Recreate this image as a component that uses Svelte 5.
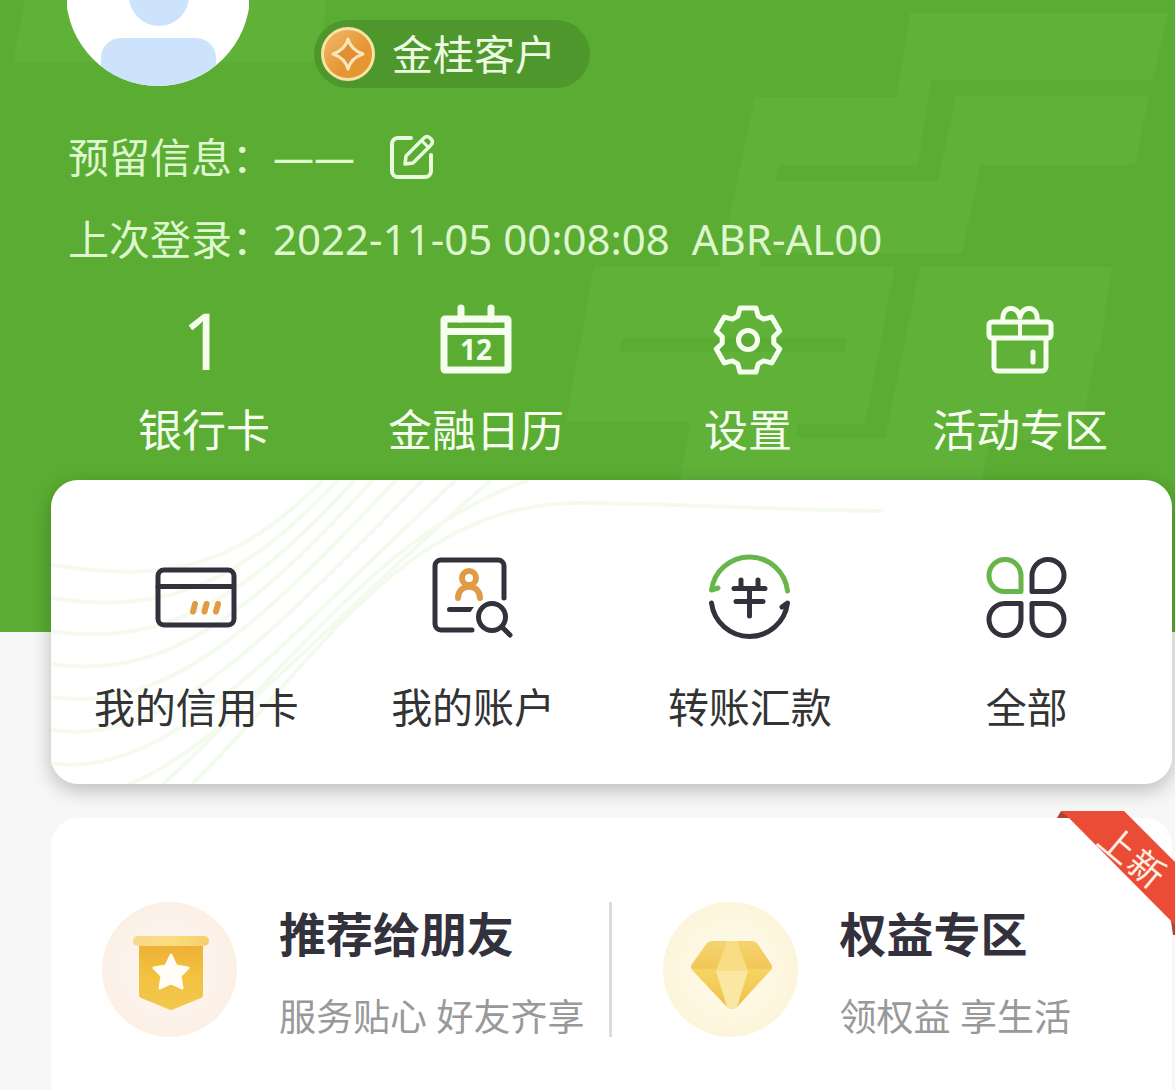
<script lang="ts">
  const waveEnds = [272, 287, 304, 322, 345, 372, 405, 440];
  const waves = waveEnds.map(
    (end, i) => `M0 ${85 + 33 * i} C120 ${103 + 33 * i} ${184 + 8 * i} ${88 + 12 * i} ${end} 0`
  );

  // six teeth: a flat top and a short valley for each
  const gear = Array.from({ length: 6 }, (_, i) => i * 60)
    .flatMap((a) => [[a - 14, 33], [a + 14, 33], [a + 23, 26], [a + 37, 26]])
    .map(([deg, r]) => {
      const t = (deg * Math.PI) / 180;
      return `${(36 + r * Math.sin(t)).toFixed(1)},${(36 - r * Math.cos(t)).toFixed(1)}`;
    })
    .join(" ");
</script>

<main>
  <header>
    <svg class="pattern" width="1175" height="480" viewBox="0 0 1175 480" aria-hidden="true">
      <path d="M25 0H326L321 62H13Z" />
      <path
        d="M910 13H1168L1153 80H932L918 165H779L776 181H938L956 96H1149L1135 165H981L962 253H762L759 267H895L865 424H798L796 438H885L920 267H1112L1100 352H966L938 480H680L690 421H566L594 267H719L755 97H897Z"
      />
      <path d="M966 352H1095L1080 440H990L982 480H938Z" />
      <path class="shade" d="M622 338H847L844 352H619Z" />
    </svg>

    <div class="profile">
      <svg width="182" height="86" viewBox="0 0 182 86" role="img" aria-label="头像">
        <defs>
          <clipPath id="avatar"><circle cx="91" cy="-6" r="92" /></clipPath>
        </defs>
        <g clip-path="url(#avatar)">
          <rect width="182" height="86" fill="#fff" />
          <circle cx="92" cy="-4" r="30" fill="#cde3fb" />
          <rect x="34" y="38" width="115" height="70" rx="20" fill="#cde3fb" />
        </g>
      </svg>
      <div class="level">
        <svg width="54" height="54" viewBox="0 0 54 54" aria-hidden="true">
          <defs>
            <linearGradient id="coin" x1="0" y1="0" x2="1" y2="1">
              <stop offset="0.2" stop-color="#efae5c" />
              <stop offset="0.6" stop-color="#e69533" />
            </linearGradient>
          </defs>
          <circle cx="27" cy="27" r="25.5" fill="url(#coin)" stroke="#f8e3a4" stroke-width="3" />
          <path d="M27 12Q30 23 42 27Q30 31 27 42Q24 31 12 27Q24 23 27 12Z" fill="#e08f35" stroke="#fbe6bb" stroke-width="3" stroke-linejoin="round" />
        </svg>
        <span>金桂客户</span>
      </div>
    </div>

    <div class="info">
      <span>预留信息：</span>
      <span>——</span>
      <button class="edit" aria-label="编辑">
        <svg width="48" height="48" viewBox="0 0 48 48" fill="none" stroke="#e9fbdc" stroke-width="4" stroke-linecap="round" stroke-linejoin="round">
          <path d="M23 5H10a6 6 0 0 0-6 6V38a6 6 0 0 0 6 6H37a6 6 0 0 0 6-6V22" />
          <path d="M17 31L18 23L36 5Q39 2 42 5L43 6Q46 9 43 12L25 30Z" stroke-width="3.5" />
          <path d="M34 8L40 14" stroke-width="3" />
        </svg>
      </button>
    </div>
    <div class="info">
      <span>上次登录：</span>
      <span class="login">2022-11-05 00:08:08&nbsp; ABR-AL00</span>
    </div>

    <nav class="quick">
      <button>
        <span class="icon count">1</span>
        <span>银行卡</span>
      </button>
      <button>
        <span class="icon">
          <svg width="72" height="72" viewBox="0 0 72 72" aria-hidden="true">
            <g fill="none" stroke="#f6ffef">
              <rect x="4" y="15" width="64" height="51" rx="1" stroke-width="7" stroke-linejoin="round" />
              <path d="M4 27.5H68" stroke-width="7" />
              <path d="M21 4V15M51 4V15" stroke-width="7" stroke-linecap="round" />
            </g>
            <text x="36" y="56" text-anchor="middle">12</text>
          </svg>
        </span>
        <span>金融日历</span>
      </button>
      <button>
        <span class="icon">
          <svg width="72" height="72" viewBox="0 0 72 72" fill="none" stroke="#f6ffef" stroke-width="5" stroke-linejoin="round" aria-hidden="true">
            <polygon points={gear} />
            <circle cx="36" cy="36" r="9.5" />
          </svg>
        </span>
        <span>设置</span>
      </button>
      <button>
        <span class="icon">
          <svg width="72" height="72" viewBox="0 0 72 72" fill="none" stroke="#f6ffef" stroke-width="5" stroke-linecap="round" stroke-linejoin="round" aria-hidden="true">
            <rect x="5" y="18" width="62" height="16" rx="3" />
            <path d="M10 35V63a4 4 0 0 0 4 4H58a4 4 0 0 0 4-4V35" />
            <path d="M36 18V34" stroke-width="4" />
            <path d="M19 17C17 1 34 1 36 13C38 1 55 1 53 17" />
            <path d="M49 48V58" />
          </svg>
        </span>
        <span>活动专区</span>
      </button>
    </nav>
  </header>

  <section class="card services">
    <svg class="waves" width="840" height="304" viewBox="0 0 840 304" fill="none" stroke="#f3fbee" stroke-width="4" aria-hidden="true">
      {#each waves as d}
        <path {d} />
      {/each}
      <path d="M112 304C240 190 330 50 478 0" />
      <path d="M141 304C260 190 350 23 526 23C620 23 720 30 832 31" />
    </svg>
    <button>
      <svg width="82" height="82" viewBox="0 0 82 82" fill="none" stroke="#32313c" stroke-width="5" stroke-linecap="round" aria-hidden="true">
        <rect x="3" y="13" width="76" height="55" rx="6" />
        <path d="M3 29.5H78" />
        <path d="M38 54.5L40 47M49.500 54.5L51.5 47M61 54.5L63 47" stroke="#e29b45" stroke-width="6" />
      </svg>
      <span>我的信用卡</span>
    </button>
    <button>
      <svg width="82" height="82" viewBox="0 0 82 82" fill="none" stroke="#32313c" stroke-width="5" stroke-linecap="round" aria-hidden="true">
        <path d="M72 41V9a6 6 0 0 0-6-6H9a6 6 0 0 0-6 6V67a6 6 0 0 0 6 6H40" />
        <g stroke="#e29b45" stroke-width="6">
          <circle cx="37" cy="21" r="7" />
          <path d="M26 41C26 26 48 26 48 41" />
        </g>
        <path d="M17.500 52.5H37" />
        <path d="M35 50H42L38 55H35Z" fill="#32313c" stroke="none" />
        <circle cx="60" cy="60" r="13.5" />
        <path d="M70 70L78 78" />
      </svg>
      <span>我的账户</span>
    </button>
    <button>
      <svg width="82" height="82" viewBox="0 0 82 82" fill="none" stroke="#32313c" stroke-width="5" stroke-linecap="round" stroke-linejoin="round" aria-hidden="true">
        <path d="M78.500 34A38.300 38.300 0 0 0 2.500 33L9 31" stroke="#68b64b" />
        <path d="M2.500 46A38.300 38.300 0 0 0 78.500 46L73 50" />
        <path d="M25 31.5H56M27 44.5H54M40.500 31.5V59M32 23V31M49 23V31" />
      </svg>
      <span>转账汇款</span>
    </button>
    <button>
      <svg width="82" height="82" viewBox="0 0 82 82" fill="none" stroke="#32313c" stroke-width="5" stroke-linejoin="round" aria-hidden="true">
        <path d="M35 34.5H18.700A16 16 0 1 1 35 18.5Z" stroke="#68b64b" />
        <path d="M46 34.5H62.300A16 16 0 1 0 46 18.5Z" />
        <path d="M35 46.5H18.700A16 16 0 1 0 35 62.5Z" />
        <path d="M46 46.5H62.300A16 16 0 1 1 46 62.5Z" />
      </svg>
      <span>全部</span>
    </button>
  </section>

  <section class="card promos">
    <a href="#recommend">
      <svg width="135" height="135" viewBox="0 0 135 135" aria-hidden="true">
        <defs>
          <radialGradient id="peach">
            <stop offset="0.5" stop-color="#fdf4ee" />
            <stop offset="1" stop-color="#fcf0e6" />
          </radialGradient>
          <linearGradient id="banner" x1="0" y1="0" x2="0" y2="1">
            <stop offset="0" stop-color="#efb035" />
            <stop offset="0.5" stop-color="#f2c240" />
            <stop offset="1" stop-color="#f2c84e" />
          </linearGradient>
          <linearGradient id="bar">
            <stop offset="0" stop-color="#f7d98a" />
            <stop offset="0.5" stop-color="#f9dd82" />
            <stop offset="1" stop-color="#f5cf68" />
          </linearGradient>
        </defs>
        <circle cx="67.5" cy="67.5" r="67.5" fill="url(#peach)" />
        <path d="M37 42H101V93Q101 95 99 96L72 107Q69 109 66 107L39 96Q37 95 37 93Z" fill="url(#banner)" />
        <rect x="31" y="34" width="76" height="10" rx="5" fill="url(#bar)" />
        <path d="M69 53L74 64L86 66L78 74L80 86L69 81L58 86L60 74L52 66L64 64Z" fill="#fffdf6" stroke="#fffdf6" stroke-width="3" stroke-linejoin="round" />
      </svg>
      <div class="text">
        <h2>推荐给朋友</h2>
        <p>服务贴心 好友齐享</p>
      </div>
    </a>
    <a href="#benefits">
      <svg width="135" height="135" viewBox="0 0 135 135" aria-hidden="true">
        <defs>
          <radialGradient id="cream">
            <stop offset="0.3" stop-color="#fefae9" />
            <stop offset="1" stop-color="#fdf5da" />
          </radialGradient>
          <linearGradient id="gem" x1="0" y1="0" x2="0" y2="1">
            <stop offset="0" stop-color="#f5d470" />
            <stop offset="0.4" stop-color="#f2c656" />
            <stop offset="0.42" stop-color="#f5d564" />
            <stop offset="1" stop-color="#efc044" />
          </linearGradient>
        </defs>
        <circle cx="67.5" cy="67.5" r="67.5" fill="url(#cream)" />
        <path d="M49 39H89Q92 39 94 41L108 62Q110 65 108 68L74 105Q69 109 64 105L29 68Q27 65 29 62L44 41Q46 39 49 39Z" fill="url(#gem)" />
        <path d="M64 39H74L85 69H53Z" fill="#f8dc86" />
        <path d="M53 69H85L74 105Q69 109 64 105Z" fill="#fae7a4" />
      </svg>
      <div class="text">
        <h2>权益专区</h2>
        <p>领权益 享生活</p>
      </div>
    </a>
    <svg class="ribbon" width="118" height="124" viewBox="0 0 118 124">
      <path d="M4 0L0 7H14ZM114 110H118V124H116Z" fill="#b3412f" />
      <path d="M4 0H67L118 51V114L12 7Z" fill="#ea4c36" />
      <text x="56 94" y="46" text-anchor="middle" dominant-baseline="central" transform="rotate(40 76 46)">上新</text>
    </svg>
  </section>
</main>

<style>
  :global(body) {
    margin: 0;
    background: #f7f7f7;
  }

  main {
    font-family: "Noto Sans", "Noto Sans CJK SC", sans-serif;
    overflow: hidden;
  }

  button {
    padding: 0;
    border: none;
    background: none;
    font: inherit;
    color: inherit;
    cursor: pointer;
  }

  svg {
    display: block;
    flex: none;
  }

  header {
    position: relative;
    padding-bottom: 172px;
    background: #5aad32;
    color: #ecfbe2;
  }
  .pattern {
    position: absolute;
    top: 0;
    right: 0;
    fill: #5fb138;
  }
  .pattern .shade {
    fill: #5aad32;
  }

  .profile {
    position: relative;
    display: flex;
    align-items: flex-start;
    gap: 65px;
    padding-left: 67px;
    margin-bottom: 28px;
  }
  .level {
    display: flex;
    align-items: center;
    gap: 17px;
    box-sizing: border-box;
    height: 68px;
    margin-top: 20px;
    padding: 0 34px 0 7px;
    border-radius: 34px;
    background: #4e972d;
    font-size: 41px;
    line-height: 56px;
  }

  .info {
    position: relative;
    display: flex;
    align-items: center;
    padding-left: 68px;
    font-size: 41px;
    line-height: 82px;
    color: #dff7cf;
    white-space: nowrap;
  }
  .login {
    font-size: 42px;
  }
  .edit {
    margin-left: 33px;
  }

  .quick {
    position: relative;
    display: grid;
    grid-template-columns: repeat(4, 1fr);
    padding: 16px 19px 0 68px;
    font-size: 44px;
    line-height: 60px;
    color: #f6ffef;
  }
  .quick button {
    display: flex;
    flex-direction: column;
    align-items: center;
    gap: 16px;
  }
  .icon {
    display: flex;
    align-items: center;
    height: 88px;
  }
  .icon text {
    font-size: 28px;
    font-weight: 700;
    fill: #f6ffef;
  }
  .count {
    font-size: 78px;
  }

  .card {
    position: relative;
    margin: 0 3px 0 51px;
    background: #fff;
  }

  .services {
    display: grid;
    grid-template-columns: repeat(4, 1fr);
    margin-top: -152px;
    padding: 77px 7px 49px;
    border-radius: 27px;
    box-shadow: 0 6px 20px rgba(0, 0, 0, 0.25);
    font-size: 41px;
    line-height: 56px;
    color: #333;
  }
  .services button {
    position: relative;
    display: flex;
    flex-direction: column;
    align-items: center;
    gap: 40px;
  }
  .services svg {
    overflow: visible;
  }
  .services .waves {
    position: absolute;
    top: 0;
    left: 0;
    overflow: hidden;
  }

  .promos {
    display: grid;
    grid-template-columns: 1fr 1fr;
    padding: 84px 0 53px;
    margin-top: 34px;
    border-radius: 27px 27px 0 0;
  }
  .promos a {
    display: flex;
    gap: 42px;
    height: 135px;
    margin-bottom: 6px;
    padding-left: 51px;
    color: #32313c;
    text-decoration: none;
  }
  .promos a:first-of-type {
    box-sizing: border-box;
    border-right: 3px solid #dcdcdc;
  }
  .text {
    white-space: nowrap;
  }
  h2 {
    margin: 0;
    font-size: 47px;
    line-height: 64px;
    font-weight: 700;
  }
  p {
    margin: 25px 0 0;
    font-size: 37px;
    line-height: 52px;
    color: #999;
  }
  .ribbon {
    position: absolute;
    top: -7px;
    right: -3px;
  }
  .ribbon text {
    font-size: 36px;
    fill: #ffeee2;
  }
</style>
